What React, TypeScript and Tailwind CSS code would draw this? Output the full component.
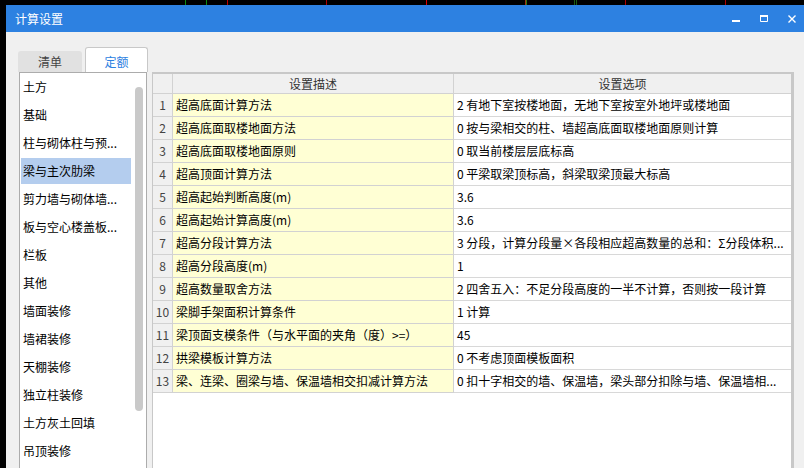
import React from "react";

const listItems = [
  "土方",
  "基础",
  "柱与砌体柱与预...",
  "梁与主次肋梁",
  "剪力墙与砌体墙...",
  "板与空心楼盖板...",
  "栏板",
  "其他",
  "墙面装修",
  "墙裙装修",
  "天棚装修",
  "独立柱装修",
  "土方灰土回填",
  "吊顶装修",
];

const rows: [string, string][] = [
  ["超高底面计算方法", "2 有地下室按楼地面，无地下室按室外地坪或楼地面"],
  ["超高底面取楼地面方法", "0 按与梁相交的柱、墙超高底面取楼地面原则计算"],
  ["超高底面取楼地面原则", "0 取当前楼层层底标高"],
  ["超高顶面计算方法", "0 平梁取梁顶标高，斜梁取梁顶最大标高"],
  ["超高起始判断高度(m)", "3.6"],
  ["超高起始计算高度(m)", "3.6"],
  ["超高分段计算方法", "3 分段，计算分段量×各段相应超高数量的总和：Σ分段体积..."],
  ["超高分段高度(m)", "1"],
  ["超高数量取舍方法", "2 四舍五入：不足分段高度的一半不计算，否则按一段计算"],
  ["梁脚手架面积计算条件", "1 计算"],
  ["梁顶面支模条件（与水平面的夹角（度）>=）", "45"],
  ["拱梁模板计算方法", "0 不考虑顶面模板面积"],
  ["梁、连梁、圈梁与墙、保温墙相交扣减计算方法", "0 扣十字相交的墙、保温墙，梁头部分扣除与墙、保温墙相..."],
];

const stripLines: [number, string][] = [
  [185, "#0b8a12"],
  [206, "#0b8a12"],
  [227, "#c00000"],
  [326, "#b00000"],
  [426, "#e00000"],
  [525, "#a03010"],
  [526, "#2a7a10"],
  [574, "#1a5a10"],
  [576, "#1a5a10"],
  [625, "#b00000"],
  [725, "#b00000"],
];

export default function App() {
  return (
    <div className="w-[804px] h-[468px] overflow-hidden bg-black flex flex-col font-['Noto_Sans_CJK_SC',sans-serif] text-[12px]">
      <svg width="804" height="5" className="block shrink-0">
        {stripLines.map(([x, c], i) => (
          <rect key={i} x={x} y={0} width={1} height={5} fill={c} />
        ))}
      </svg>
      <div className="flex flex-1 min-h-0">
        <div className="w-[6px] shrink-0 bg-black" />
        <div className="flex-1 flex flex-col min-w-0">
          {/* Title bar */}
          <div className="h-[27px] shrink-0 bg-[#2d81e1] flex items-center justify-between pl-[9px] pr-[8px]">
            <span className="text-white text-[12px] leading-none">计算设置</span>
            <div className="flex items-center gap-[20px]">
              <svg width="8" height="8" viewBox="0 0 8 8" className="block">
                <rect x="0" y="5" width="8" height="2" fill="#fff" />
              </svg>
              <svg width="8" height="8" viewBox="0 0 8 8" className="block">
                <path d="M0.5 0.5 H7.5 V6.5 H0.5 Z" fill="none" stroke="#fff" strokeWidth="1" />
                <rect x="0" y="0" width="8" height="2" fill="#fff" />
              </svg>
              <svg width="8" height="8" viewBox="0 0 8 8" className="block">
                <path d="M0.5 0.5 L7.5 7.5 M7.5 0.5 L0.5 7.5" stroke="#fff" strokeWidth="1.4" />
              </svg>
            </div>
          </div>
          {/* Body */}
          <div className="flex-1 min-h-0 bg-[#f0f0f0] flex flex-col pt-[15px]">
            {/* Tabs */}
            <div className="flex items-end gap-[3px] h-[25px] ml-[12px] shrink-0">
              <div className="w-[64px] h-[21px] bg-[#e1e1e1] rounded-t-[3px] flex items-center justify-center text-[#444]">
                清单
              </div>
              <div className="w-[63px] h-[25px] bg-white border border-b-0 border-[#c8c8c8] rounded-t-[3px] flex items-center justify-center pt-[3px] text-[#2d81e1]">
                定额
              </div>
            </div>
            {/* Content */}
            <div className="flex flex-1 min-h-0 ml-[13px]">
              {/* Left list */}
              <div className="w-[128px] shrink-0 bg-white border border-b-0 border-[#acacac] flex overflow-hidden">
                <div className="w-[110px] ml-[1px] pt-[1px] flex flex-col">
                  {listItems.map((t, i) => (
                    <div key={i} className="h-[28px] shrink-0">
                      <div
                        className={
                          "h-[26px] flex items-center pl-[2px] text-black whitespace-nowrap " +
                          (i === 3 ? "bg-[#b4cdee]" : "")
                        }
                      >
                        {t}
                      </div>
                    </div>
                  ))}
                </div>
                <div className="w-[8px] ml-[4px] pt-[14px]">
                  <div className="h-[324px] w-[8px] rounded-full bg-[#c9c9c9]" />
                </div>
              </div>
              {/* Table */}
              <div className="w-[642px] shrink-0 ml-[5px] bg-white border-l border-t-[2px] border-r-[3px] border-[#c8c8c8] flex flex-col overflow-hidden">
                <div className="grid grid-cols-[20px_281px_1fr] h-[20px] shrink-0 bg-[#f0f0f0] text-[#333]">
                  <div className="border-r border-b border-[#d2d2d2]" />
                  <div className="border-r border-b border-[#d2d2d2] flex items-center justify-center">设置描述</div>
                  <div className="border-b border-[#d2d2d2] flex items-center justify-center">设置选项</div>
                </div>
                {rows.map(([d, v], i) => (
                  <div key={i} className="grid grid-cols-[20px_281px_1fr] h-[23px] shrink-0">
                    <div className="bg-[#f0f0f0] border-r border-b border-[#d2d2d2] flex items-center justify-center text-[#444]">
                      {i + 1}
                    </div>
                    <div className="bg-[#ffffd4] border-r border-b border-[#d2d2d2] flex items-center pl-[3px] text-black whitespace-nowrap overflow-hidden">
                      {d}
                    </div>
                    <div className="bg-white border-b border-[#d8d8d8] flex items-center pl-[3px] text-black whitespace-nowrap overflow-hidden">
                      {v}
                    </div>
                  </div>
                ))}
              </div>
              <div className="flex-1" />
            </div>
          </div>
        </div>
      </div>
    </div>
  );
}
